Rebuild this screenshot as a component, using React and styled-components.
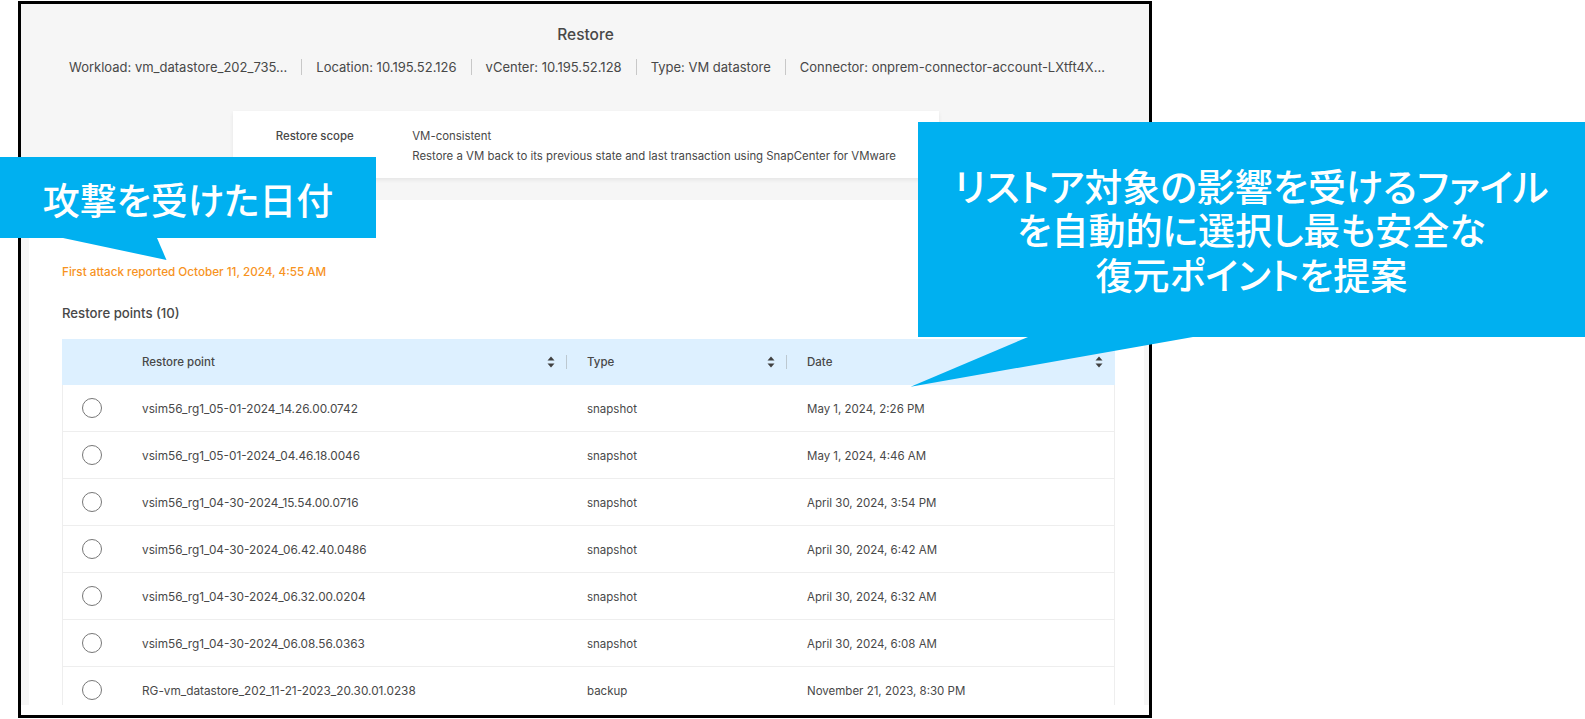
import styled, { createGlobalStyle } from "styled-components";

const rows = [
  ["vsim56_rg1_05-01-2024_14.26.00.0742", "snapshot", "May 1, 2024, 2:26 PM"],
  ["vsim56_rg1_05-01-2024_04.46.18.0046", "snapshot", "May 1, 2024, 4:46 AM"],
  ["vsim56_rg1_04-30-2024_15.54.00.0716", "snapshot", "April 30, 2024, 3:54 PM"],
  ["vsim56_rg1_04-30-2024_06.42.40.0486", "snapshot", "April 30, 2024, 6:42 AM"],
  ["vsim56_rg1_04-30-2024_06.32.00.0204", "snapshot", "April 30, 2024, 6:32 AM"],
  ["vsim56_rg1_04-30-2024_06.08.56.0363", "snapshot", "April 30, 2024, 6:08 AM"],
  ["RG-vm_datastore_202_11-21-2023_20.30.01.0238", "backup", "November 21, 2023, 8:30 PM"],
];

const meta = [
  "Workload: vm_datastore_202_735...",
  "Location: 10.195.52.126",
  "vCenter: 10.195.52.128",
  "Type: VM datastore",
  "Connector: onprem-connector-account-LXtft4X...",
];

const GlobalStyle = createGlobalStyle`
  html, body {
    margin: 0;
    background: #fff;
    overflow: hidden;
  }
  body {
    font-family: Inter, "Liberation Sans", sans-serif;
    color: #484848;
  }
`;

const Page = styled.div`
  position: relative;
  width: 1585px;
  height: 719px;
  padding: 1px 0 0 18px;
  box-sizing: border-box;
`;

const Frame = styled.div`
  width: 1134px;
  height: 716.5px;
  box-sizing: border-box;
  border: 3px solid #000;
  background: #fff;
  display: flex;
  flex-direction: column;
`;

const Header = styled.header`
  height: 196px;
  flex: none;
  background: #f6f6f6;
  display: flex;
  flex-direction: column;
  align-items: center;
  padding-top: 20px;
  box-sizing: border-box;
`;

const Title = styled.h1`
  margin: 0 0 0 1px;
  font-size: 15.5px;
  line-height: 22px;
  font-weight: 500;
`;

const MetaRow = styled.div`
  display: flex;
  align-items: center;
  margin: 10.5px 0 0 4px;
  height: 20px;
  font-size: 13px;
`;

const MetaItem = styled.span`
  white-space: nowrap;
  padding: 0 14px;
  & + & {
    border-left: 1px solid #c8c8c8;
  }
`;

const ScopeCard = styled.section`
  width: 705.5px;
  height: 67px;
  margin: 34.5px 0 0 2px;
  box-sizing: border-box;
  padding: 15px 0 0 42.5px;
  background: #fff;
  box-shadow: 0 2px 4px rgba(0, 0, 0, 0.07);
  display: grid;
  grid-template-columns: 136.5px 1fr;
  font-size: 11.4px;
  line-height: 20px;
`;

const ScopeLabel = styled.div`
  font-weight: 500;
`;

const Scroller = styled.div`
  height: 505px;
  flex: none;
  overflow: hidden;
  background: #f6f6f6;
  padding: 0 5px 0 8px;
  box-sizing: border-box;
`;

const Panel = styled.main`
  min-height: 100%;
  background: #fff;
  padding: 62.7px 29px 0 33px;
  box-sizing: border-box;
`;

const Attack = styled.div`
  font-size: 11.7px;
  line-height: 18px;
  color: #f7931e;
  font-weight: 500;
`;

const SectionTitle = styled.h2`
  margin: 22px 0 16px;
  font-size: 13.2px;
  line-height: 20px;
  font-weight: 500;
`;

const Table = styled.div`
  border-left: 1px solid #eee;
  border-right: 1px solid #eee;
  font-size: 11.5px;
`;

const Row = styled.div`
  display: grid;
  grid-template-columns: 79px 445px 220px 1fr;
  align-items: center;
  height: 47px;
  box-sizing: border-box;
  border-bottom: 1px solid #eee;
`;

const HeadRow = styled(Row)`
  height: 46.5px;
  background: #ddf0ff;
  border-bottom: 0;
  margin: 0 -1px;
  padding: 0 1px;
  font-weight: 500;
`;

const HeadCell = styled.div`
  display: flex;
  align-items: center;
  padding: 1px ${(props) => (props.$last ? "11px" : "20px")} 0 0;
`;

const HeadLabel = styled.span`
  flex: 1;
`;

const SortIcon = styled.svg`
  width: 8px;
  height: 12px;
  flex: none;
  fill: #404040;
`;

const Divider = styled.span`
  width: 1px;
  height: 14px;
  margin-left: 11px;
  background: #bcc8d0;
`;

const Radio = styled.span`
  display: block;
  width: 20px;
  height: 20px;
  margin-left: 19px;
  border: 1px solid #777;
  border-radius: 50%;
  box-sizing: border-box;
`;

const Cell = styled.span`
  padding-top: 2px;
`;

const NameCell = styled(Cell)`
  font-size: 11.8px;
`;

const Callout = styled.div`
  position: absolute;
  left: ${(props) => props.$left}px;
  top: ${(props) => props.$top}px;
  width: ${(props) => props.$width}px;
  height: ${(props) => props.$height}px;
  background: #00b0f0;
  color: #fff;
  display: flex;
  flex-direction: column;
  align-items: center;
  justify-content: center;
  font-family: "Noto Sans CJK JP", sans-serif;
  font-feature-settings: "palt";
  font-weight: 500;
  white-space: nowrap;
`;

const ShortNote = styled.div`
  font-size: 37px;
  line-height: 44px;
  padding-top: 2px;
`;

const NoteLine = styled.div`
  font-size: ${(props) => (props.$wide ? "38px" : "37px")};
  line-height: 45px;
  text-align: center;
`;

const Tail = styled.svg`
  position: absolute;
  left: 0;
  top: 100%;
  overflow: visible;
  fill: #00b0f0;
`;

const Sort = () => (
  <SortIcon viewBox="0 0 8 12">
    <path d="M4 0.5 7.5 4.5H0.5Z" />
    <path d="M0.5 7.5H7.5L4 11.5Z" />
  </SortIcon>
);

export default function App() {
  return (
    <Page>
      <GlobalStyle />
      <Frame>
        <Header>
          <Title>Restore</Title>
          <MetaRow>
            {meta.map((item) => (
              <MetaItem key={item}>{item}</MetaItem>
            ))}
          </MetaRow>
          <ScopeCard>
            <ScopeLabel>Restore scope</ScopeLabel>
            <div>
              VM-consistent
              <br />
              Restore a VM back to its previous state and last transaction using SnapCenter for VMware
            </div>
          </ScopeCard>
        </Header>
        <Scroller>
          <Panel>
            <Attack>First attack reported October 11, 2024, 4:55 AM</Attack>
            <SectionTitle>Restore points (10)</SectionTitle>
            <Table>
              <HeadRow>
                <span />
                <HeadCell>
                  <HeadLabel>Restore point</HeadLabel>
                  <Sort />
                  <Divider />
                </HeadCell>
                <HeadCell>
                  <HeadLabel>Type</HeadLabel>
                  <Sort />
                  <Divider />
                </HeadCell>
                <HeadCell $last>
                  <HeadLabel>Date</HeadLabel>
                  <Sort />
                </HeadCell>
              </HeadRow>
              {rows.map(([name, type, date]) => (
                <Row key={name}>
                  <Radio />
                  <NameCell>{name}</NameCell>
                  <Cell>{type}</Cell>
                  <Cell>{date}</Cell>
                </Row>
              ))}
            </Table>
          </Panel>
        </Scroller>
      </Frame>
      <Callout $left={0} $top={157} $width={376} $height={81}>
        <ShortNote>攻撃を受けた日付</ShortNote>
        <Tail width="170" height="24">
          <polygon points="63,0 157,0 166.5,22" />
        </Tail>
      </Callout>
      <Callout $left={918} $top={122} $width={667} $height={215}>
        <NoteLine $wide>リストア対象の影響を受けるファイル</NoteLine>
        <NoteLine>を自動的に選択し最も安全な</NoteLine>
        <NoteLine>復元ポイントを提案</NoteLine>
        <Tail width="280" height="50">
          <polygon points="110,0 275,0 -7.4,49.7" />
        </Tail>
      </Callout>
    </Page>
  );
}
